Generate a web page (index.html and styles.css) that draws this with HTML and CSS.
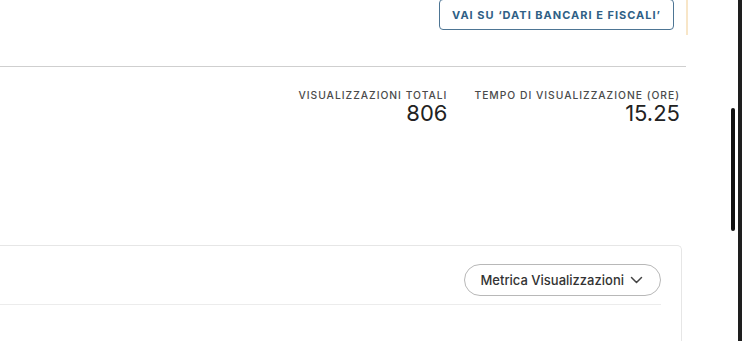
FILE: index.html
```html
<!DOCTYPE html>
<html lang="it">
<head>
    <meta charset="UTF-8">
    <meta name="viewport" content="width=device-width, initial-scale=1.0">
    <title>Statistiche</title>
    <link rel="stylesheet" href="styles.css">
</head>
<body>
    <div class="app">
        <div class="content">
            <div class="banner">
                <button class="btn-outline">VAI SU ‘DATI BANCARI E FISCALI’</button>
            </div>
            <div class="divider"></div>
            <div class="stats">
                <div class="stat">
                    <span class="stat-label">VISUALIZZAZIONI TOTALI</span>
                    <span class="stat-value">806</span>
                </div>
                <div class="stat">
                    <span class="stat-label">TEMPO DI VISUALIZZAZIONE (ORE)</span>
                    <span class="stat-value">15.25</span>
                </div>
            </div>
            <div class="card">
                <div class="card-head">
                    <button class="pill">Metrica Visualizzazioni
                        <svg width="13" height="8" viewBox="0 0 13 8"><path d="M1.5 1.5 L6.5 6.5 L11.5 1.5" fill="none" stroke="#444" stroke-width="1.5" stroke-linecap="round" stroke-linejoin="round"/></svg>
                    </button>
                </div>
            </div>
        </div>
        <div class="gutter">
            <div class="thumb"></div>
        </div>
        <div class="edge"></div>
    </div>
</body>
</html>
```

FILE: styles.css
```css
* {
    margin: 0;
    padding: 0;
    box-sizing: border-box;
    font-family: Inter, 'Noto Sans', Arial, sans-serif;
}
body {
    background-color: #ffffff;
    color: #222222;
    overflow: hidden;
}
.app {
    display: flex;
    height: 341px;
    width: 742px;
}
/* Main column */
.content {
    width: 688px;
    flex-shrink: 0;
}
.banner {
    height: 35px;
    display: flex;
    justify-content: flex-end;
    align-items: flex-start;
    padding-right: 12px;
    border-right: 2px solid #f8e6c8;
}
.btn-outline {
    height: 31px;
    padding: 0 12px;
    margin-top: -1px;
    background: #ffffff;
    border: 1px solid #4d7594;
    border-radius: 4px;
    color: #2f5f86;
    font-size: 11px;
    font-weight: 700;
    letter-spacing: 1px;
}
.divider {
    margin-top: 31px;
    margin-right: 2px;
    border-top: 1px solid #cfcfcf;
}
/* Stats */
.stats {
    display: flex;
    justify-content: flex-end;
    gap: 27px;
    padding: 22px 8px 0 0;
    height: 178px;
}
.stat {
    display: flex;
    flex-direction: column;
    align-items: flex-end;
}
.stat-label {
    font-size: 10.3px;
    font-weight: 500;
    letter-spacing: 1px;
    color: #4a4a4a;
    line-height: 13px;
}
.stat-value {
    font-size: 22px;
    line-height: 22px;
    color: #222222;
}
/* Card */
.card {
    margin: 0 6px 0 -10px;
    border: 1px solid #e6e6e6;
    border-bottom: none;
    border-radius: 0 5px 0 0;
    padding-right: 20px;
    height: 100px;
}
.card-head {
    display: flex;
    justify-content: flex-end;
    padding: 18px 0 8px;
    border-bottom: 1px solid #ececec;
}
.pill {
    display: flex;
    align-items: center;
    gap: 6px;
    height: 32px;
    padding: 0 17px 0 15px;
    background: #ffffff;
    border: 1px solid #b8b8b8;
    border-radius: 16px;
    color: #333333;
    font-size: 13px;
    font-weight: 500;
}
/* Scroll area */
.gutter {
    flex: 1;
    position: relative;
}
.thumb {
    position: absolute;
    top: 108px;
    right: 3px;
    width: 4px;
    height: 123px;
    border-radius: 2px;
    background: #111111;
}
.edge {
    width: 4px;
    background: #1e1e1e;
}
```
